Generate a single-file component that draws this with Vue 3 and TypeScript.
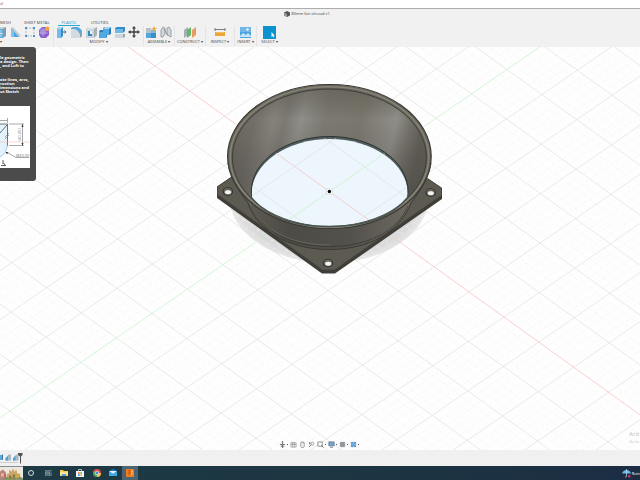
<script setup lang="ts">
interface Tool { name: string; art: string }
interface Group { id: string; label: string; tools: Tool[] }
interface Line { x1: number; y1: number; x2: number; y2: number }

const tabs = [
  { id: 'mesh', label: 'MESH', active: false },
  { id: 'sheet', label: 'SHEET METAL', active: false },
  { id: 'plastic', label: 'PLASTIC', active: true },
  { id: 'utilities', label: 'UTILITIES', active: false },
]

const groups: Group[] = [
  {
    id: 'create', label: '▾',
    tools: [
      { name: 'Box', art: '<path d="M1 3l3-2h7v8l-3 2H1z" fill="#c3ccd3"/><path d="M1 3h7v9H1z" fill="#5fa9dc"/><path d="M3 4v7M6 4v7M1 7.5h7" stroke="#dcebf5" stroke-width=".7"/><path d="M8 3l3-2v9l-3 2z" fill="#8499a8"/>' },
      { name: 'Wedge', art: '<path d="M2 2l2-1 8 9-2 1z" fill="#c2cad0"/><path d="M2 2v9h8z" fill="#4ba3df"/><path d="M2 2l3 4v5H2z" fill="#83c2ec"/>' },
      { name: 'Sketch pattern', art: '<path d="M2 2h8v8H2z" fill="none" stroke="#9aa4ab" stroke-width=".7" stroke-dasharray="2 1"/><path d="M1 1h2v2H1zM9 1h2v2H9zM1 9h2v2H1zM9 9h2v2H9z" fill="#4596d3"/>' },
      { name: 'Create form', art: '<path d="M1 4l3-3h6l1 3v5l-3 3H3L1 9z" fill="#8660cb"/><path d="M2 4l3-2 3 2v4L5 9 2 8z" fill="#aa87df"/><path d="M5 4v7M1 7h9" stroke="#c8afe9" stroke-width=".6"/><circle cx="9.2" cy="2.8" r="2.2" fill="#f2a23b"/>' },
    ],
  },
  {
    id: 'modify', label: 'MODIFY ▾',
    tools: [
      { name: 'Press pull', art: '<path d="M1 3l2-2h4v9l-2 2H1z" fill="#348fc9"/><path d="M1 3h4v9H1z" fill="#74bbe9"/><path d="M1 3l2-2h4L5 3z" fill="#b4d9ef"/><path d="M6 6h4M8.5 4.5L10 6l-1.5 1.5" fill="none" stroke="#43759a" stroke-width="1"/>' },
      { name: 'Fillet', art: '<path d="M1 2l2-1h4q4 1 5 5v4l-2 2H1z" fill="#8fa0ac"/><path d="M1 3h4q4 1 5 5v4H1z" fill="#d3dbe0"/><path d="M3 1h4q4 1 5 5l-2 2Q8 4 5 3H1z" fill="#5aaae0"/>' },
      { name: 'Shell', art: '<path d="M1 3l2-2h9v8l-3 3H1z" fill="#a7b1b8"/><path d="M1 3h8v9H1z" fill="#ccd4d9"/><path d="M3 5h4v5H3z" fill="#318bc7"/><path d="M5 5h2v3H5z" fill="#eff6fa"/><path d="M1 3l2-2h9L9 3z" fill="#e3e7e9"/>' },
      { name: 'Combine', art: '<path d="M4 2l2-1h6v7l-2 1H8v2l-1 1H0V6l1-2h3z" fill="#287db9"/><path d="M4 3h6v6H7v3H0V6h4z" fill="#53a9df"/><path d="M4 3l2-2h6l-2 2z" fill="#a4d3ef"/>' },
      { name: 'Split body', art: '<path d="M1 2l2-1h8v4L9 7H1z" fill="#338dc9"/><path d="M1 3h8v4H1z" fill="#70b9e7"/><path d="M1 8h10v3l-2 1H1z" fill="#9ca8b1"/><path d="M1 8h8v4H1z" fill="#ccd6dc"/>' },
      { name: 'Move', art: '<path d="M6 0l2 2.5H6.700v2.800h2.800V4L12 6 9.500 8V6.700H6.700v2.800H8L6 12 4 9.500h1.300V6.700H2.500V8L0 6l2.500-2v1.300h2.800V2.500H4z" fill="#3e4245"/>' },
    ],
  },
  {
    id: 'assemble', label: 'ASSEMBLE ▾',
    tools: [
      { name: 'New component', art: '<path d="M1 2h5v5H1z" fill="#b6c0c7"/><path d="M1 7h5v5H1z" fill="#54a6dc"/><path d="M6 4h5v8H6z" fill="#398fc8"/><path d="M6 4h5v3H6z" fill="#7fbce4"/><path d="M9 0l1 2 2 .5-2 1L9.500 6 8.500 4 6 3l2-.8z" fill="#f2a63d"/>' },
      { name: 'Joint', art: '<path d="M1 11V4l2-3 2 1v6l-2 3zM7 8V2l2-1 2 3v7L9 10z" fill="#d3d7d9" stroke="#8b9298" stroke-width=".8"/><path d="M4 3l4 7" stroke="#7b848b" stroke-width=".8"/>' },
    ],
  },
  { id: 'construct', label: 'CONSTRUCT ▾', tools: [{ name: 'Offset plane', art: '<path d="M0 4l4-3v8l-4 3z" fill="#a3afb3"/><path d="M3 4l4-3v8l-4 3z" fill="#62b76c"/><path d="M8 4l4-3v8l-4 3z" fill="#eb9a63"/>' }] },
  { id: 'inspect', label: 'INSPECT ▾', tools: [{ name: 'Measure', art: '<path d="M1 2v3M11 2v3M1 3.500h10" stroke="#59626a" stroke-width=".8"/><path d="M1 6h10v4H1z" fill="#eda636"/><path d="M3 6v1M5 6v1M7 6v1M9 6v1" stroke="#fff" stroke-width=".5"/>' }] },
  { id: 'insert', label: 'INSERT ▾', tools: [{ name: 'Insert image', art: '<path d="M1 1h11v11H1z" fill="#4aa4dc"/><path d="M1 1h11v5H1z" fill="#6fb7e6"/><path d="M1 10l3-3 3 2 2-2 3 3v1H1z" fill="#c9e4f5"/><circle cx="8.500" cy="3.500" r="1.200" fill="#eff8fd"/>' }] },
  { id: 'select', label: 'SELECT ▾', tools: [{ name: 'Select', art: '<path d="M0 0h13v13H0z" fill="#0b93cf"/><path d="M8.500 6v5l1.200-1 .8 1.500.8-.5-.7-1.500h1z" fill="#fff"/>' }] },
]

const navTools: Tool[] = [
  { name: 'Orbit', art: '<path d="M4 0v8M1 4h6M2 6h4" stroke="#777" stroke-width="1.300"/>' },
  { name: 'Look at', art: '<path d="M1 2h6v5H1zM1 4h6M3 1v6M5 1v6" fill="none" stroke="#929292" stroke-width=".8"/>' },
  { name: 'Pan', art: '<path d="M2 4V2h1V1h2v1h1v4L5 7.500H3L1.500 5z" fill="#eee" stroke="#808080" stroke-width=".8"/>' },
  { name: 'Zoom', art: '<path d="M1 7l3-3M2 1v3M1 2.500h2" stroke="#777" stroke-width=".9"/><circle cx="5" cy="3" r="1.700" fill="none" stroke="#808080" stroke-width=".8"/>' },
  { name: 'Fit', art: '<path d="M1 1h5v5H1z" fill="none" stroke="#808080" stroke-width=".9"/><path d="M5 5l2.500 2.500" stroke="#555"/>' },
  { name: 'Display settings', art: '<path d="M1 1h6v4.500H1z" fill="#6ca9da" stroke="#667582" stroke-width=".9"/><path d="M2.500 7.200h3" stroke="#666"/>' },
  { name: 'Grid settings', art: '<path d="M1 1h6v6H1z" fill="#a6a9ac"/><path d="M1 3h6M1 5h6M3 1v6M5 1v6" stroke="#808080" stroke-width=".5"/>' },
  { name: 'Viewports', art: '<path d="M1 1h6v6H1z" fill="#659fd3"/><path d="M1 4h6M4 1v6" stroke="#8cbbe2" stroke-width=".6"/>' },
]
const withMenu = [0, 4, 5, 6, 7]

const taskApps = [
  { name: 'Search', active: false, art: '<circle cx="4" cy="4" r="2.500" fill="none" stroke="#e5edf0" stroke-width=".9"/>' },
  { name: 'Task view', active: false, art: '<path d="M1.500 1v1h4V1M1.500 7V6h4v1M1.500 3.200h4v1.600h-4zM7 1v1.500M7 3.500V7" fill="none" stroke="#b3c1c7" stroke-width=".7"/>' },
  { name: 'File Explorer', active: false, art: '<path d="M0 1h3l1 1h4v5H0z" fill="#f5cf50"/><path d="M0 3h8v3H0z" fill="#fce58c"/><path d="M2 5h4v2H2z" fill="#4a9edb"/>' },
  { name: 'Store', active: false, art: '<path d="M0 2h8v6H0z" fill="#f4f7f8"/><path d="M2.500 2V.500h3V2" fill="none" stroke="#e6eef1" stroke-width=".7"/><path d="M2 3.200h1.700v1.600H2z" fill="#e8633a"/><path d="M4.300 3.200H6v1.600H4.300z" fill="#63ad39"/><path d="M2 5.300h1.700V7H2z" fill="#3a99d8"/><path d="M4.300 5.300H6V7H4.300z" fill="#efb934"/>' },
  { name: 'Chrome', active: false, art: '<circle cx="4" cy="4" r="4" fill="#e24b3c"/><path d="M4 4L.5 2A4 4 0 0 0 4 8z" fill="#44a458"/><path d="M4 4h4a4 4 0 0 1-4 4z" fill="#f3c33b"/><circle cx="4" cy="4" r="1.800" fill="#4787d8" stroke="#fff" stroke-width=".6"/>' },
  { name: 'Mail', active: false, art: '<path d="M0 2l4-2 4 2v5H0z" fill="#1a79c7"/><path d="M0 2h8L4 5z" fill="#e5f5fd"/><path d="M0 2.500L4 5l4-2.500V7H0z" fill="#3eabe9"/>' },
  { name: 'Fusion', active: true, art: '<path d="M0 0h8v8H0z" fill="#ee7d20"/><path d="M2.500 1.500h3M2.500 4h2.500M3 1.500v5" fill="none" stroke="#c9590f" stroke-width="1"/><path d="M5 1h2v4L5 7z" fill="#f7a34d"/>' },
]

const tipLines = [
  ['le geometric', 'a design. Then', ', and Loft to'],
  ['ate lines, arcs,', 'ruction', 'imensions and', 'ut Sketch'],
]

/* Ground plane: origin and the screen vectors of one major cell. */
const origin = { x: 329.4, y: 191.5 }
const u = { x: 34.9, y: 25.1 }
const v = { x: -35.5, y: 24.4 }

function ray(a: number, b: number, d: { x: number; y: number }): Line {
  const x = origin.x + a * u.x + b * v.x
  const y = origin.y + a * u.y + b * v.y
  return { x1: x - d.x * 30, y1: y - d.y * 30, x2: x + d.x * 30, y2: y + d.y * 30 }
}

const major: Line[] = []
const minor: Line[] = []
for (let i = -80; i <= 80; i++) {
  const k = i / 5
  const set = i % 5 === 0 ? major : minor
  if (i !== 0) set.push(ray(0, k, u), ray(k, 0, v))
}
const redAxis = ray(0, 0, u)
const greenAxis = ray(0, 0, v)
</script>

<template>
  <div class="app">
    <header class="titlebar">sl</header>

    <section class="ribbon">
      <div class="doc">
        <svg class="doc-icon" viewBox="0 0 6 6"><path d="M0 1.500L3 0l3 1.500v3L3 6 0 4.500z" fill="#555" /><path d="M0 1.500L3 3v3L0 4.500z" fill="#999" /></svg>
        <span>80mm fan shroud v1</span>
      </div>
      <nav class="tabs">
        <button v-for="t in tabs" :key="t.id" type="button" :class="['tab', t.id, { active: t.active }]">{{ t.label }}</button>
      </nav>
      <div class="groups">
        <div v-for="g in groups" :key="g.id" :class="['group', g.id]">
          <div class="tools">
            <button v-for="t in g.tools" :key="t.name" type="button" class="tool" :aria-label="t.name">
              <svg viewBox="0 0 13 13" v-html="t.art" />
            </button>
          </div>
          <button type="button" class="group-label">{{ g.label }}</button>
        </div>
      </div>
    </section>

    <main class="viewport">
      <svg class="scene" viewBox="0 47 640 403" preserveAspectRatio="xMidYMid slice">
        <defs>
          <linearGradient id="inner" x1="0" x2="1" y1="0" y2="0.15">
            <stop offset="0" stop-color="#66645c" />
            <stop offset="0.14" stop-color="#716f68" />
            <stop offset="0.24" stop-color="#85837c" />
            <stop offset="0.3" stop-color="#7c7a73" />
            <stop offset="0.38" stop-color="#8f8e88" />
            <stop offset="0.5" stop-color="#7c7a72" />
            <stop offset="0.68" stop-color="#7a776e" />
            <stop offset="0.86" stop-color="#8f8e88" />
            <stop offset="0.93" stop-color="#75736c" />
            <stop offset="1" stop-color="#605e56" />
          </linearGradient>
          <linearGradient id="depth" x1="0" x2="0" y1="0" y2="1">
            <stop offset="0" stop-color="#5d5a50" stop-opacity="0.6" />
            <stop offset="0.22" stop-color="#56534a" stop-opacity="0" />
            <stop offset="0.5" stop-color="#45433d" stop-opacity="0.25" />
            <stop offset="1" stop-color="#45433d" stop-opacity="0.6" />
          </linearGradient>
          <linearGradient id="outer" x1="0" x2="1" y1="0" y2="0">
            <stop offset="0" stop-color="#66635a" />
            <stop offset="0.3" stop-color="#4d4b45" />
            <stop offset="0.6" stop-color="#53514b" />
            <stop offset="0.88" stop-color="#6c6960" />
            <stop offset="1" stop-color="#55534c" />
          </linearGradient>
          <radialGradient id="shade">
            <stop offset="0.9" stop-color="#d9d9d9" />
            <stop offset="1" stop-color="#e7e7e7" />
          </radialGradient>
          <clipPath id="mouth"><ellipse cx="329.400" cy="157.500" rx="97" ry="68.500" /></clipPath>
          <clipPath id="bore"><ellipse cx="329.700" cy="192" rx="78" ry="54" /></clipPath>
        </defs>

        <ellipse cx="329" cy="196" rx="100" ry="67" fill="url(#shade)" />
        <g class="minor"><line v-for="(l, i) in minor" :key="i" v-bind="l" /></g>
        <g class="major"><line v-for="(l, i) in major" :key="i" v-bind="l" /></g>
        <line v-bind="redAxis" class="red" />
        <line v-bind="greenAxis" class="green" />

        <path d="M231 177l-14 9.500v11.500L322 273.500h13L442 199v-11l-14-9.500z" fill="#3f3d38" />
        <path d="M231 177.500l-13.500 9.500v7.500L322.500 270h12L441.500 195.500v-7.500l-13.500-9z" fill="#5d5a51" stroke="#45433c" stroke-width=".7" />
        <g v-for="h in [[227.8, 191.5], [430.6, 192.5], [328, 263]]" :key="h[0]">
          <ellipse :cx="h[0]" :cy="h[1]" rx="5.200" ry="4.300" fill="#2f2e2a" />
          <ellipse :cx="h[0]" :cy="h[1] - 0.5" rx="4.200" ry="3" fill="#69675f" />
          <ellipse :cx="h[0] + 0.2" :cy="h[1] + 0.7" rx="3.500" ry="2.500" fill="#f4f4f2" stroke="#33322e" stroke-width=".5" />
        </g>

        <path d="M228 163C231 182 243 196 248 203C258 232 290 249.500 329.500 249.500S400 232 411 203C416 196 428 182 431 163z" fill="url(#outer)" stroke="#37362f" stroke-width=".9" />
        <path d="M251 206C263 232 292 246.500 329.500 246.500S397 232 408 206" fill="none" stroke="#34332e" stroke-width=".7" />
        <path d="M249 201C259 229 290 245 329.500 245" fill="none" stroke="#77746a" stroke-width=".6" />

        <ellipse cx="329.400" cy="156.500" rx="101.800" ry="72" fill="#68665c" stroke="#3a3933" stroke-width="1.200" />
        <ellipse cx="329.400" cy="157" rx="99.300" ry="70.200" fill="none" stroke="#858376" stroke-width="1.500" />
        <ellipse cx="329.400" cy="157.500" rx="97" ry="68.500" fill="url(#inner)" />
        <ellipse cx="329.400" cy="157.500" rx="97" ry="68.500" fill="url(#depth)" stroke="#3e3d37" stroke-width="1" />

        <g clip-path="url(#mouth)">
          <ellipse cx="329.700" cy="191" rx="78.300" ry="54.500" fill="#505d5e" stroke="#2f3333" stroke-width="1" />
          <g clip-path="url(#bore)">
            <ellipse cx="329.700" cy="193.500" rx="78" ry="54.500" fill="#edf6fc" />
            <g class="major floor"><line v-for="(l, i) in major" :key="i" v-bind="l" /></g>
            <line v-bind="redAxis" class="red" />
            <line v-bind="greenAxis" class="green" />
          </g>
        </g>
        <path d="M251 197C268 218 296 226.500 329.400 226.500S391 218 408 197" fill="none" stroke="#48534f" stroke-width="1.300" />
        <rect x="326.500" y="189" width="6" height="5" fill="#fff" stroke="#b6bdc0" stroke-width=".4" />
        <circle cx="329.400" cy="191.500" r="1.700" fill="#080808" />
      </svg>

      <aside class="tip">
        <p v-for="(para, i) in tipLines" :key="i">
          <span v-for="line in para" :key="line">{{ line }}</span>
        </p>
        <svg class="figure" viewBox="0 0 30 62">
          <rect width="30" height="62" fill="#fff" />
          <path d="M0 18h7.500v22Q6 47 0 51z" fill="#e4f2fb" />
          <path d="M0 18h7.500v22M0 27l7-8" fill="none" stroke="#43505a" stroke-width=".8" />
          <path d="M7.500 39Q6 48 0 51" fill="none" stroke="#86bde2" stroke-width=".8" />
          <path d="M0 36h30" stroke="#f2bcbc" stroke-width=".6" />
          <path d="M0 14.500h7M7.500 12v5M9 18h15M9 39.500h15M22.500 18v21M8 47l8 4.500h13M5 31l4-4M5 33l4-4" fill="none" stroke="#697178" stroke-width=".6" />
          <path d="M5.500 46l3 .3-1.500 2zM21.500 21l1-3 1 3zM21.500 37l1 3 1-3z" fill="#333" />
          <path d="M3 54v4M1 59.500h5M3.500 57l1.500 2" stroke="#333" stroke-width=".8" />
          <text x="16" y="51" font-size="4">Ø40.00</text>
          <text transform="translate(20.500 35) rotate(-90)" font-size="4">(40.00)</text>
        </svg>
      </aside>

      <div class="watermark"><b>Acti</b><span>Go to</span></div>

      <div class="navbar">
        <button v-for="(n, i) in navTools" :key="n.name" type="button" :aria-label="n.name" :class="{ menu: withMenu.includes(i) }">
          <svg viewBox="0 0 8 8" v-html="n.art" />
        </button>
      </div>
    </main>

    <section class="timeline">
      <svg class="history" viewBox="0 0 24 16">
        <path d="M0 5h3v5H0z" fill="#5ba8dc" /><path d="M2 5l1-1v5l-1 1z" fill="#3876a2" />
        <path d="M5.500 9l3-4.500h2.500v6H5.500z" fill="#a7bac6" /><path d="M5.500 10.500V8L8 6v4.500z" fill="#4a9fd9" />
        <path d="M13 9l3-4.500h2.500v6H13z" fill="#a7bac6" /><path d="M13 10.500V8l2.500-2v4.500z" fill="#4a9fd9" />
        <path d="M0 12.500h18" stroke="#c2c2c2" stroke-width=".7" />
        <path d="M18 3h4.500v2L21 6.500v7h-1v-7L18 5z" fill="#505355" />
      </svg>
    </section>

    <footer class="taskbar">
      <svg class="widget" viewBox="0 0 23 13">
        <path d="M0 0h23v13H0z" fill="#ece7df" />
        <path d="M0 5l3-2 3 3v7H0z" fill="#b98375" /><path d="M1 7h3v3H1z" fill="#e7b6b0" />
        <path d="M7 13V7h2V5l1-2 1 2v1l2-4 2 4V5l1-2 1 2v2h3v6z" fill="#c9a566" />
        <path d="M9 9h2v4H9zM13 8h2v5h-2z" fill="#8f6c42" />
        <path d="M3 13q3-5 6-1l4-2 4 2 3-2 3 2v1z" fill="#7c9257" />
        <circle cx="5" cy="9" r="1.200" fill="#d95145" /><circle cx="19" cy="9" r="1.200" fill="#e0a332" />
      </svg>
      <nav class="apps">
        <button v-for="a in taskApps" :key="a.name" type="button" :aria-label="a.name" :class="['task', { active: a.active }]">
          <svg viewBox="0 0 8 8" v-html="a.art" />
        </button>
      </nav>
      <div class="weather">
        <svg viewBox="0 0 9 9"><path d="M0 4.500Q1 1 4.500 1T9 4.500z" fill="#6ab9ec" /><path d="M4.500 0v7.500q-1 1-1.500 0" fill="none" stroke="#b7dcf3" stroke-width=".7" /><circle cx="7.200" cy="7.200" r="1.300" fill="#d72a5c" /></svg>
        <span>Rain</span>
      </div>
    </footer>
  </div>
</template>

<style>
body { background: #fff; overflow: hidden; }
</style>

<style scoped>
.app { display: flex; flex-direction: column; height: 100vh; overflow: hidden; font-family: "Open Sans", "Noto Sans", sans-serif; font-size: 4px; line-height: 5px; color: #444; }
button { appearance: none; border: 0; margin: 0; padding: 0; background: none; font: inherit; color: inherit; white-space: nowrap; }
svg { display: block; }
.titlebar { flex: none; height: 8px; background: #fff; border-bottom: 1px solid #adadad; line-height: 8px; }
.ribbon { flex: none; display: flex; flex-direction: column; height: 38px; background: #f1f1f1; }
.doc { display: flex; justify-content: center; align-items: center; gap: 1px; height: 9px; padding-right: 26px; }
.doc-icon { width: 6px; height: 6px; }
.tabs { display: flex; height: 8px; }
.tab { height: 8px; text-align: center; }
.tab.mesh { width: 9px; }
.tab.sheet { width: 23px; margin-left: 15px; }
.tab.plastic { width: 22px; margin-left: 11px; }
.tab.utilities { width: 16px; margin-left: 11px; }
.tab.active { box-sizing: border-box; padding-top: 1px; color: #1a93cb; border-bottom: 1px solid #2ea5d8; }
.groups { display: flex; height: 20px; }
.group { display: flex; flex-direction: column; align-items: center; flex: none; box-sizing: border-box; border-right: 1px solid #e4e4e4; }
.tools { display: flex; justify-content: space-around; width: 100%; }
.tool { display: block; width: 13px; height: 13px; }
.tool svg { width: 13px; height: 13px; }
.group-label { height: 5px; line-height: 5px; }
.create { width: 60px; margin-left: -6px; padding-right: 1px; }
.create .group-label { align-self: flex-start; margin-left: 6px; }
.modify { width: 90px; padding: 0 1px; }
.assemble { width: 31px; }
.construct { width: 31px; }
.inspect { width: 29px; }
.insert { width: 22px; }
.select { width: 25px; border-right: 0; }
.viewport { position: relative; flex: 1; min-height: 0; overflow: hidden; background: #fefefe; }
.scene { width: 100%; height: 100%; }
.minor line { stroke: #f3f3f4; stroke-width: .5; stroke-dasharray: 4 2; }
.major line { stroke: #dcdcdd; stroke-width: .6; }
.major.floor line { stroke: #d6dfe5; }
.red { stroke: #f8c4c4; stroke-width: .8; }
.green { stroke: #c6f4ca; stroke-width: .8; }
.tip { position: absolute; left: 0; top: 0; box-sizing: border-box; width: 36px; height: 134px; padding-top: 9px; border-radius: 0 3px 3px 0; background: #4b4b4b; color: #fff; font-weight: 700; line-height: 4px; white-space: nowrap; overflow: hidden; }
.tip p { margin: 0 0 10px; }
.tip p span { display: block; }
.tip p:nth-of-type(2) { margin-bottom: 12px; }
.figure { width: 30px; height: 62px; }
.figure text { fill: #70767b; font-weight: 400; }
.watermark { position: absolute; right: 0; bottom: 5px; width: 11px; color: #c0c0c0; white-space: nowrap; overflow: hidden; }
.watermark b { display: block; font-size: 6px; line-height: 8px; font-weight: 400; }
.watermark span { display: block; line-height: 7px; }
.navbar { position: absolute; left: 0; right: 0; bottom: 2px; display: flex; justify-content: center; align-items: center; gap: 2px; height: 8px; padding-right: 2px; }
.navbar button { display: flex; align-items: center; gap: 1px; }
.navbar svg { width: 7px; height: 7px; }
.navbar .menu::after { content: ""; width: 1px; height: 1px; background: #555; }
.timeline { flex: none; height: 16px; background: #f0f0f0; }
.history { width: 24px; height: 16px; }
.taskbar { flex: none; display: flex; align-items: stretch; height: 14px; background: linear-gradient(90deg, #1d3b45, #1c3542 60%, #1c2d43); }
.widget { width: 23px; height: 14px; }
.apps { display: flex; width: 115px; }
.task { display: flex; align-items: center; justify-content: center; flex: 1; }
.task svg { width: 8px; height: 8px; }
.task.active { background: #4b6672; }
.weather { display: flex; align-items: center; gap: 1px; margin-left: auto; color: #fff; white-space: nowrap; }
.weather svg { flex: none; width: 9px; height: 9px; }
</style>
